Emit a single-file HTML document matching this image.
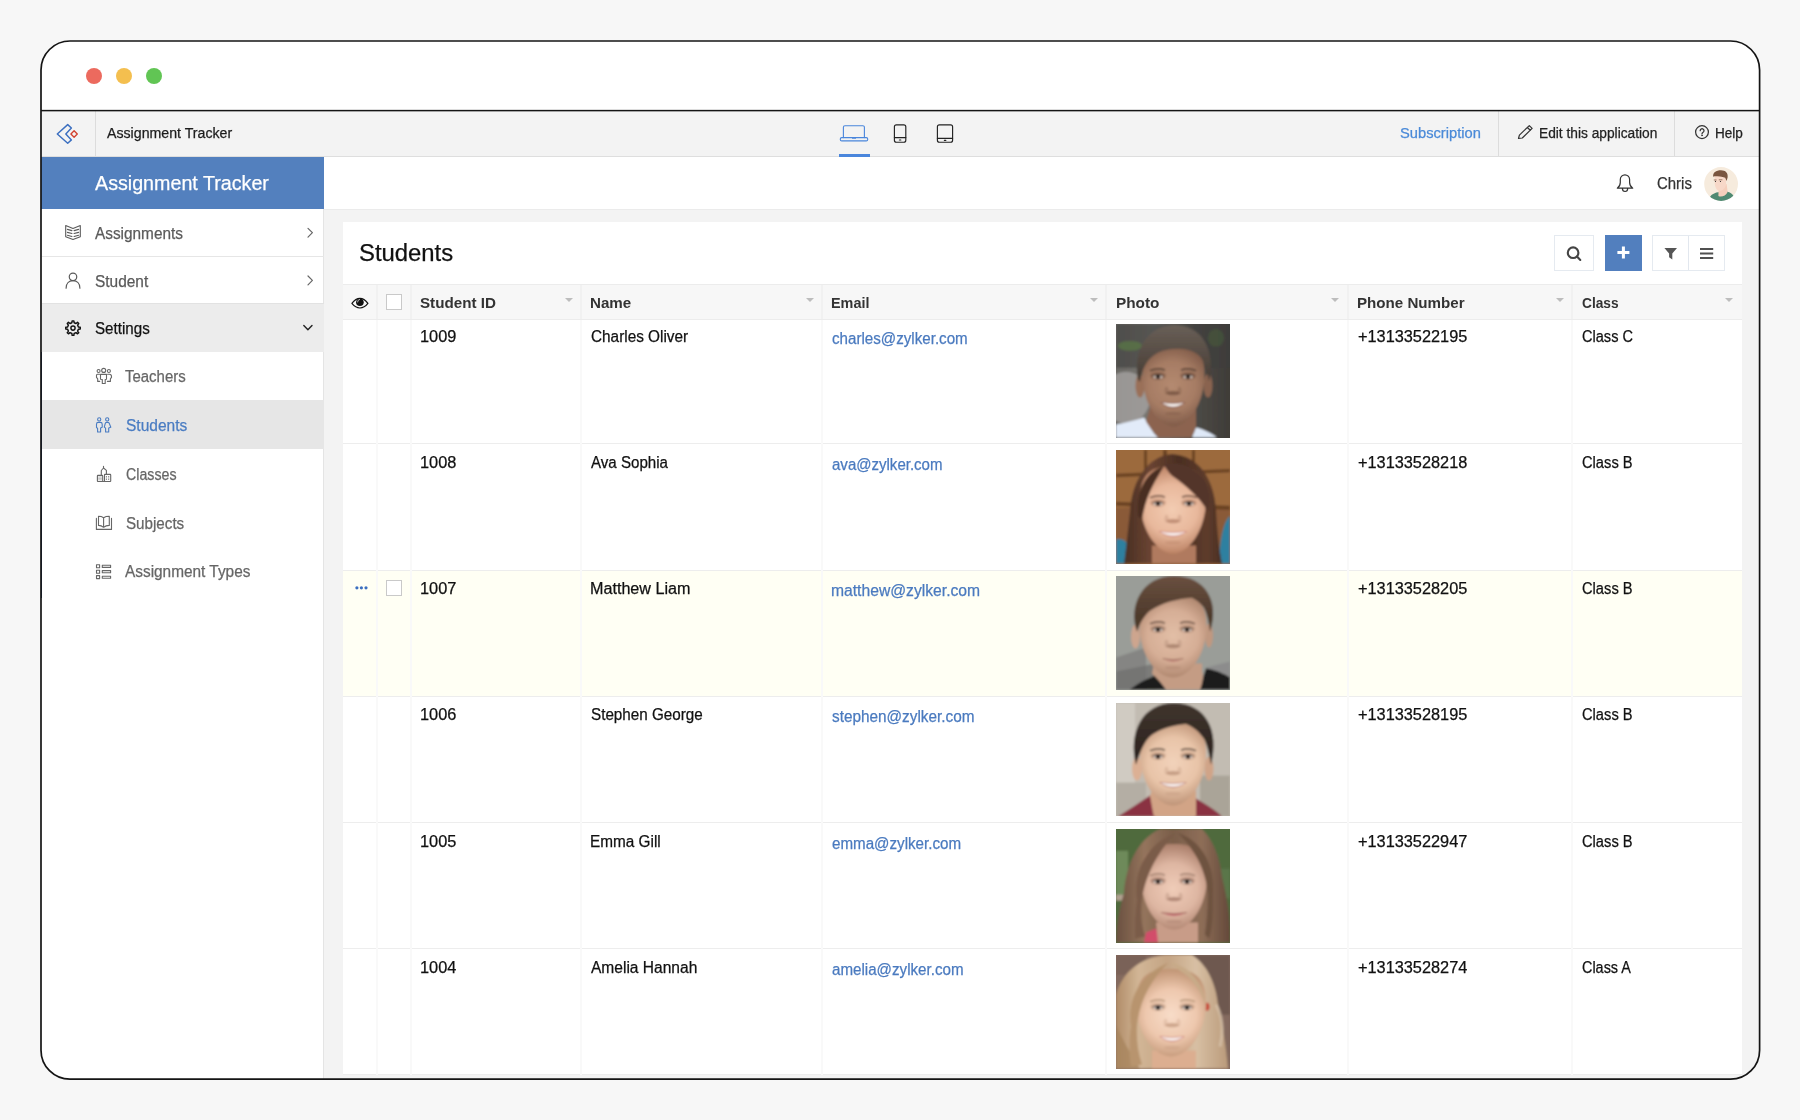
<!DOCTYPE html>
<html lang="en">
<head>
<meta charset="utf-8">
<title>Assignment Tracker - Students</title>
<style>
html,body{margin:0;padding:0}
body{width:1800px;height:1120px;overflow:hidden;background:#f7f7f7;font-family:"Liberation Sans",sans-serif;position:relative}
#win{position:absolute;left:41px;top:41px;width:1718.6px;height:1038.2px;border-radius:29px;overflow:hidden;background:#fff}
#in{opacity:.999;position:absolute;left:-41px;top:-41px;width:1800px;height:1120px}
#in div,#in svg,#in span{position:absolute}
.t{transform-origin:0 0;white-space:nowrap;line-height:20px;-webkit-font-smoothing:antialiased;-webkit-text-stroke:.25px currentColor}
.dot{width:16px;height:16px;border-radius:50%;top:67.8px}
.vl{width:1px;background:#dcdcdc}
.hl{height:1px;background:#e6e6e6}
.cd{width:2px;margin-left:-.5px;top:320px;height:755px;background:#f9f9f9}
.rs{left:343px;width:1399px;height:1px;background:#ededed}
.tri{width:0;height:0;border-left:4.2px solid transparent;border-right:4.2px solid transparent;border-top:4.6px solid #bdbdbd;top:297.8px}
.btn{top:235px;height:36px;border:1px solid #e5eaf0;background:#fff;box-sizing:border-box}
.ph{left:1116px;width:114px;height:113.4px;overflow:hidden}
#frame{position:absolute;left:0;top:0}

</style>
</head>
<body>
<div id="win"><div id="in">
<!-- title bar -->
<div class="dot" style="left:85.8px;background:#ec6a5e"></div>
<div class="dot" style="left:115.8px;background:#f4bf4f"></div>
<div class="dot" style="left:145.9px;background:#61c554"></div>
<!-- app bar -->
<div style="left:40px;top:111.3px;width:1720px;height:45px;background:#f3f3f3"></div>
<div class="hl" style="left:40px;top:155.8px;width:1720px;background:#dedede"></div>
<div class="vl" style="left:95px;top:111px;height:45px"></div>
<div class="vl" style="left:1498px;top:111px;height:45px"></div>
<div class="vl" style="left:1674px;top:111px;height:45px"></div>
<div style="left:838.7px;top:154px;width:31.6px;height:3px;background:#4a86dc"></div>
<!-- sidebar -->
<div style="left:40px;top:156.6px;width:283.7px;height:52.2px;background:#5380be"></div>
<div style="left:323.7px;top:156.6px;width:1440px;height:52.4px;background:#fff"></div>
<div style="left:323.7px;top:209px;width:1440px;height:900px;background:#f3f3f3"></div>
<div class="hl" style="left:323.7px;top:208.8px;width:1440px;background:#ebebeb"></div>
<div class="vl" style="left:323.2px;top:209px;height:880px;background:#e4e4e4"></div>
<div class="hl" style="left:42px;top:256.4px;width:281.5px"></div>
<div style="left:42px;top:303.2px;width:281.5px;height:48.6px;background:#ececec"></div>
<div class="hl" style="left:42px;top:303.2px;width:281.5px;background:#e2e2e2"></div>
<div style="left:42px;top:400.3px;width:281.5px;height:49px;background:#e6e6e6"></div>
<div style="left:41px;top:352px;width:1.3px;height:245.5px;background:#1d3a6e"></div>
<!-- panel -->
<div style="left:343px;top:221.6px;width:1399px;height:853.4px;background:#fff"></div>
<div style="left:343px;top:284.4px;width:1399px;height:35.2px;background:#f7f7f7"></div>
<div class="hl" style="left:343px;top:284px;width:1399px;background:#ececec"></div>
<div class="hl" style="left:343px;top:319.3px;width:1399px;background:#ececec"></div>
<div style="left:343px;top:570.4px;width:1399px;height:125.8px;background:#fffff4"></div>
<div class="rs" style="top:443px"></div>
<div class="rs" style="top:570px"></div>
<div class="rs" style="top:696px"></div>
<div class="rs" style="top:822px"></div>
<div class="rs" style="top:948px"></div>
<div class="rs" style="top:1074px"></div>
<div class="cd" style="left:376.3px"></div>
<div class="cd" style="left:410.3px"></div>
<div class="cd" style="left:580.6px"></div>
<div class="cd" style="left:821.8px"></div>
<div class="cd" style="left:1105.8px"></div>
<div class="cd" style="left:1347.6px"></div>
<div class="cd" style="left:1571px"></div>
<div class="cd" style="left:376.3px;top:285px;height:34px;background:#f1f1f1"></div>
<div class="cd" style="left:410.3px;top:285px;height:34px;background:#f1f1f1"></div>
<div class="cd" style="left:580.6px;top:285px;height:34px;background:#f1f1f1"></div>
<div class="cd" style="left:821.8px;top:285px;height:34px;background:#f1f1f1"></div>
<div class="cd" style="left:1105.8px;top:285px;height:34px;background:#f1f1f1"></div>
<div class="cd" style="left:1347.6px;top:285px;height:34px;background:#f1f1f1"></div>
<div class="cd" style="left:1571px;top:285px;height:34px;background:#f1f1f1"></div>
<div class="tri" style="left:564.6px"></div>
<div class="tri" style="left:805.8px"></div>
<div class="tri" style="left:1090.2px"></div>
<div class="tri" style="left:1331.4px"></div>
<div class="tri" style="left:1555.6px"></div>
<div class="tri" style="left:1724.8px"></div>
<!-- checkboxes -->
<div style="left:386px;top:294px;width:16px;height:15.6px;box-sizing:border-box;border:1px solid #c9c9c9;background:#fff"></div>
<div style="left:386px;top:580.2px;width:16px;height:15.6px;box-sizing:border-box;border:1px solid #c9c9c9;background:#fff"></div>
<!-- buttons -->
<div class="btn" style="left:1554px;width:40px"></div>
<div class="btn" style="left:1605px;width:37px;background:#527fbe;border-color:#527fbe"></div>
<div class="btn" style="left:1652px;width:73px"></div>
<div class="vl" style="left:1688.3px;top:236px;height:34px;background:#e2e7ee"></div>
<svg style="left:0;top:0" width="1800" height="1120" viewBox="0 0 1800 1120" fill="none" stroke-linecap="round" stroke-linejoin="round">
<path d="M57.3,134 L67.7,124.6 L71.4,128 L65.8,134 L71.4,139.9 L67.7,143.3 Z" stroke="#3b6fc0" stroke-width="1.45"/>
<path d="M74.1,130.8 L77.3,134 L74.1,137.2 L70.9,134 Z" stroke="#d2422f" stroke-width="1.35"/>
<g stroke="#4a86dc" stroke-width="1.1"><path d="M843.4,137.6 V127.2 a1.5,1.5 0 0 1 1.5,-1.5 H862.9 a1.5,1.5 0 0 1 1.5,1.5 V137.6"/><rect x="840.3" y="137.6" width="27.4" height="3.3" rx="1.4"/><path d="M852,137.8 h4 v0.9 h-4z" fill="#4a86dc" stroke="none"/></g>
<g stroke="#222" stroke-width="1.15"><rect x="894.4" y="124.8" width="11.4" height="17.4" rx="2"/><path d="M894.4,137.6 H905.8"/><path d="M899.4,140 h1.4" stroke-width="1.2"/></g>
<g stroke="#222" stroke-width="1.15"><rect x="937.4" y="124.8" width="15.2" height="17.4" rx="2"/><path d="M937.4,138.3 H952.6"/><path d="M944.4,140.4 h1.4" stroke-width="1.2"/></g>
<path d="M1518.5,138.5 L1519.4,135.1 L1529.3,125.6 L1532.1,128.4 L1522.3,138 Z M1527.3,127.5 L1530.3,130.3" stroke="#333" stroke-width="1.2"/>
<g stroke="#333"><circle cx="1702" cy="132.1" r="6.4" stroke-width="1.25"/><path d="M1700.2,130.7 a1.9,1.9 0 1 1 2.9,1.6 c-0.8,0.5 -1.1,0.8 -1.1,1.6" stroke-width="1.3"/><circle cx="1702" cy="135.5" r="0.5" fill="#333" stroke-width="0.6"/></g>
<path d="M1617.3,188.2 H1632.7 C1630.6,186.6 1629.6,184.6 1629.6,182.4 V179.6 a4.65,4.8 0 0 0 -9.3,0 V182.4 C1620.3,184.6 1619.4,186.6 1617.3,188.2 Z M1622.4,188.6 a2.65,2.9 0 0 0 5.3,0" stroke="#333" stroke-width="1.2"/>
<g stroke="#5a5a5a" stroke-width="1.1"><path d="M65.7,225.6 L73,228.4 L80.3,225.6 V236.7 L73,239.4 L65.7,236.7 Z"/>
<path d="M67.4,229.40 L71.9,230.60 M78.6,229.40 L74.1,230.60"/>
<path d="M67.4,232.35 L71.9,233.55 M78.6,232.35 L74.1,233.55"/>
<path d="M67.4,235.30 L71.9,236.50 M78.6,235.30 L74.1,236.50"/>
</g>
<g stroke="#5a5a5a" stroke-width="1.2"><circle cx="73" cy="276.8" r="3.75"/><path d="M66.1,288.2 C66.1,283.6 69,280.7 73,280.7 C77,280.7 79.9,283.6 79.9,288.2"/></g>
<path d="M71.88,322.71 L72.14,320.85 L73.86,320.85 L74.12,322.71 L76.02,323.50 L77.52,322.37 L78.73,323.58 L77.60,325.08 L78.39,326.98 L80.25,327.24 L80.25,328.96 L78.39,329.22 L77.60,331.12 L78.73,332.62 L77.52,333.83 L76.02,332.70 L74.12,333.49 L73.86,335.35 L72.14,335.35 L71.88,333.49 L69.98,332.70 L68.48,333.83 L67.27,332.62 L68.40,331.12 L67.61,329.22 L65.75,328.96 L65.75,327.24 L67.61,326.98 L68.40,325.08 L67.27,323.58 L68.48,322.37 L69.98,323.50 Z" stroke="#111" stroke-width="1.45"/><circle cx="73" cy="328.1" r="2.1" stroke="#111" stroke-width="1.4"/>
<path d="M308,228.3 L312.4,232.7 L308,237.1" stroke="#666" stroke-width="1.2"/>
<path d="M308,276 L312.4,280.4 L308,284.8" stroke="#666" stroke-width="1.2"/>
<path d="M303.8,325.6 L307.9,329.8 L312,325.6" stroke="#222" stroke-width="1.4"/>
<g stroke="#666" stroke-width="1.1"><circle cx="103.7" cy="370.4" r="2"/><circle cx="98.6" cy="371" r="1.5"/><circle cx="108.9" cy="371" r="1.5"/><path d="M100.5,374.4 H106.5 V379.2 L105.2,379.5 V383.5 H102.3 V379.5 L100.5,379.2 Z"/><path d="M99.6,374.2 H97.4 C96.8,374.2 96.5,374.6 96.5,375.2 V377.4 L97.7,378.8 V381.4 H99.7"/><path d="M107.6,374.2 H109.4 C110.6,374.2 111.5,375.2 111.5,376.4 V377.4 L110.4,378.8 V381.4 H107.4"/></g>
<g stroke="#4a7cc2" stroke-width="1.1"><circle cx="99.2" cy="419.4" r="1.6"/><circle cx="107.2" cy="419.4" r="1.6"/><path d="M98.2,422.4 H100.4 C101.6,422.4 102.2,423.2 102.2,424.2 V427.2 L100.6,428 V432 H97.6 V428.5 L96.5,427.4 V424.2 C96.5,423.2 97.2,422.4 98.2,422.4 Z"/><path d="M106.4,422.4 H108 C108.8,422.4 109.2,422.9 109.4,423.6 L110.8,427.3 L108.7,428 V432 H105.6 V428.2 L104.3,427.1 L105.2,423.6 C105.4,422.9 105.8,422.4 106.4,422.4 Z"/></g>
<g stroke="#666" stroke-width="1.1"><path d="M103.5,466.2 V467.9 M101.3,475 V470.5 L103.5,468 L106.4,470.4 V474"/><rect x="97.4" y="475.4" width="5.3" height="6.1" rx="0.5"/><rect x="104.5" y="474.4" width="6.2" height="7.1" rx="0.5"/><path d="M102.7,481.5 H104.5"/><path d="M98.6,477 H101.5 M98.6,478.4 H101.5 M98.6,479.8 H101.5" stroke="#999" stroke-width="0.6"/><path d="M106.4,476.5 V479.6 M108.7,476.5 V479.6" stroke-width="0.9" stroke-dasharray="0.6 1.8"/></g>
<g stroke="#666" stroke-width="1.1"><path d="M96.4,518.4 V529.4 H111.5 V518.4"/><path d="M98.5,516.3 C100.5,516.3 102.2,516.8 103.6,517.7 C105,516.8 106.9,516.3 109.3,516.3 V525.4 C106.9,525.4 105,526.1 103.6,527.3 C102.2,526.1 100.5,525.4 98.5,525.4 Z M103.6,517.7 V527.3"/></g>
<g stroke="#666" stroke-width="1.1">
<rect x="96.5" y="564.7" width="3.1" height="3"/><rect x="102.3" y="565.3" width="8.3" height="2.1"/>
<rect x="96.5" y="570.3" width="3.1" height="3"/><rect x="102.3" y="570.6" width="8.3" height="2.1"/>
<rect x="96.5" y="575.6" width="3.1" height="3"/><rect x="102.3" y="576.2" width="8.3" height="2.1"/>
</g>
<path d="M351.9,303.4 C354.5,299.9 357,298.4 359.9,298.4 C362.8,298.4 365.4,299.9 367.9,303.4 C365.4,306.6 362.8,308 359.9,308 C357,308 354.5,306.6 351.9,303.4 Z" stroke="#111" stroke-width="1.2"/>
<circle cx="359.9" cy="302.3" r="3.8" fill="#111"/><path d="M357.6,302 a2.4,2.4 0 0 1 2,-2.6" stroke="#fff" stroke-width="0.7"/>
<g fill="#3b6fc0"><circle cx="356.9" cy="587.8" r="1.6"/><circle cx="361.4" cy="587.8" r="1.6"/><circle cx="366" cy="587.8" r="1.6"/></g>
<g stroke="#444" stroke-width="2.1"><circle cx="1573.1" cy="252.7" r="5.3"/><path d="M1577,256.6 L1580.3,259.9"/></g>
<path d="M1623.4,246.4 V258.4 M1617.4,252.4 H1629.4" stroke="#fff" stroke-width="3" stroke-linecap="butt"/>
<path d="M1664.4,247.9 H1677 L1672.3,253.4 V259.6 L1669.1,257.2 V253.4 Z" fill="#555"/>
<path d="M1700,249 H1713.2 M1700,253.5 H1713.2 M1700,258 H1713.2" stroke="#505050" stroke-width="2" stroke-linecap="butt"/>
<g><clipPath id="av"><circle cx="1721.1" cy="184" r="16.9"/></clipPath><g clip-path="url(#av)"><rect x="1704" y="167" width="35" height="35" fill="#f6ebdd"/><path d="M1708,202 C1709,196 1713,193 1718,192.3 L1727,191.5 C1731,192.5 1734.5,195 1736,202 Z" fill="#4f8a72"/><path d="M1718.6,188 L1726.6,184 L1727.6,192 C1726,196 1721,197.5 1718.4,196 Z" fill="#f5cfbc"/><path d="M1714.6,176 H1726 V184 C1726,188 1722,191.4 1719,190.8 C1716.5,190.3 1715,187 1714.8,184 Z" fill="#f7d8c8"/><path d="M1713.2,176.8 C1712.6,172.5 1716,170.2 1721,170.2 C1725.5,170.2 1728.4,173 1727.6,177.5 L1726.6,181 L1725.2,177.8 C1722,176 1718,176.6 1714.6,176.2 Z" fill="#79553f"/><circle cx="1715.5" cy="181.5" r="0.6" fill="#222"/><circle cx="1720.5" cy="181.5" r="0.6" fill="#222"/><path d="M1714.2,180 h2 M1719.2,179.8 h2.8" stroke="#79553f" stroke-width="0.7"/></g></g>
</svg>
<svg style="left:0;top:0" width="0" height="0"><defs><filter id="bl" x="-5%" y="-5%" width="110%" height="110%"><feGaussianBlur stdDeviation="0.9"/></filter></defs></svg>
<div class="ph" style="top:324.4px"><svg style="left:-4px;top:-4px" width="122" height="121.4" viewBox="-4 -4 122 122" preserveAspectRatio="none"><g filter="url(#bl)"><rect x="-4" y="-4" width="122" height="122" fill="#888"/><defs><radialGradient id="f1" gradientUnits="userSpaceOnUse" cx="56" cy="62" r="44"><stop offset="0" stop-color="#b48a70"/><stop offset="0.55" stop-color="#a67c64"/><stop offset="1" stop-color="#7a5644"/></radialGradient><linearGradient id="b1" gradientUnits="userSpaceOnUse" x1="0" y1="0" x2="114" y2="0"><stop offset="0" stop-color="#6a6864"/><stop offset="0.35" stop-color="#7a7874"/><stop offset="0.7" stop-color="#4c4a46"/><stop offset="1" stop-color="#3f3c38"/></linearGradient><linearGradient id="h1" gradientUnits="userSpaceOnUse" x1="0" y1="0" x2="0" y2="50"><stop offset="0" stop-color="#6a6058"/><stop offset="1" stop-color="#4a4038"/></linearGradient></defs><rect x="-4" y="-4" width="122" height="122" fill="url(#b1)"/><rect x="0" y="0" width="114" height="44" fill="#3e3e3c" opacity=".6"/><ellipse cx="10" cy="74" rx="24" ry="26" fill="#a8a6a4" opacity=".75"/><ellipse cx="14" cy="22" rx="12" ry="5" fill="#5d8a40" opacity=".5"/><ellipse cx="100" cy="14" rx="8" ry="9" fill="#4a6a3a" opacity=".4"/><path d="M0,114 V101 C10,99 20,97 28,94 L38,110 L42,114Z" fill="#e2ebf9"/><path d="M80,104 C88,106 96,110 101,114 H76Z" fill="#dfe9f8"/><path d="M34,84 H80 V103 C78,110 76,114 74,114 H42 C38,110 34,104 30,98Z" fill="#8c6450"/><ellipse cx="24" cy="62" rx="4.5" ry="12" fill="#9a7058"/><ellipse cx="92" cy="62" rx="4.5" ry="12" fill="#8a6450"/><path d="M26.5,50.3 C26.5,24.8 38.3,18 57.5,18 C76.7,18 88.5,24.8 88.5,50.3 C88.5,79.2 73.0,103 57.5,103 C42.0,103 26.5,79.2 26.5,50.3Z" fill="url(#f1)"/><path d="M22,56 C17,28 30,2 58,1 C86,1 100,26 93,58 C91,48 89,40 85,34 C80,28 72,25 62,25 C50,25 42,28 36,33 C30,38 26,46 24,58Z" fill="url(#h1)"/><ellipse cx="42" cy="52" rx="8" ry="4.2" fill="#5a3a2c" opacity=".35"/><ellipse cx="72" cy="52" rx="8" ry="4.2" fill="#5a3a2c" opacity=".35"/><path d="M34,47 q8,-3.5 15,-0.5 M65,46.5 q7,-3 15,0.5" stroke="#3a2c24" stroke-width="1.8" fill="none" opacity="0.75"/><ellipse cx="42" cy="53" rx="4.8" ry="1.9" fill="#d9cbc2"/><ellipse cx="72" cy="53" rx="4.8" ry="1.9" fill="#d9cbc2"/><circle cx="42" cy="53" r="2.4" fill="#2e2420"/><circle cx="72" cy="53" r="2.4" fill="#2e2420"/><path d="M36.5,52.5 q5.5,-3.4 11,0 M66.5,52.5 q5.5,-3.4 11,0" stroke="#2e2420" stroke-width="1.1" fill="none" opacity=".85"/><ellipse cx="57" cy="69.5" rx="6.5" ry="2.2" fill="#5a3a2c" opacity=".55"/><ellipse cx="50.5" cy="67" rx="2" ry="4" fill="#5a3a2c" opacity=".22"/><ellipse cx="63.5" cy="67" rx="2" ry="4" fill="#5a3a2c" opacity=".22"/><path d="M44.5,78.5 Q57,80.5 69.5,78.5 Q57,90 44.5,78.5Z" fill="#7a4a40"/><path d="M46.0,79.2 Q57,81.2 68.0,79.2 Q57,87 46.0,79.2Z" fill="#fbf6f2"/><ellipse cx="57" cy="90" rx="8" ry="1.8" fill="#5a3a2c" opacity=".2"/></g></svg></div>
<div class="ph" style="top:450.2px"><svg style="left:-4px;top:-4px" width="122" height="121.4" viewBox="-4 -4 122 122" preserveAspectRatio="none"><g filter="url(#bl)"><rect x="-4" y="-4" width="122" height="122" fill="#888"/><defs><radialGradient id="f2" gradientUnits="userSpaceOnUse" cx="56" cy="60" r="46"><stop offset="0" stop-color="#f3ccb2"/><stop offset="0.55" stop-color="#e8b89c"/><stop offset="1" stop-color="#b87e60"/></radialGradient><linearGradient id="h2" gradientUnits="userSpaceOnUse" x1="0" y1="0" x2="114" y2="0"><stop offset="0" stop-color="#3e281e"/><stop offset="0.3" stop-color="#6a4432"/><stop offset="0.55" stop-color="#4a2e22"/><stop offset="0.8" stop-color="#5e3c2c"/><stop offset="1" stop-color="#3e281e"/></linearGradient></defs><rect x="-4" y="-4" width="122" height="122" fill="#9c6a3e"/><rect x="0" y="58" width="114" height="56" fill="#8a5a38"/><path d="M28,0 h3 v60 h-3z M47,0 h4 v12 h-4z M76,0 h3 v40 h-3z M0,24 L114,19 v3.5 L0,27.5z M0,52 L114,56 v4 L0,56z" fill="#5e3a1e" opacity=".8"/><path d="M0,90 C6,88 12,92 14,100 L10,114 H0Z" fill="#2f80a0"/><path d="M114,66 C108,72 104,86 103,114 H114Z" fill="#2f80a0"/><path d="M8,114 C10,100 12,80 14,62 C16,30 32,6 56,4 C84,6 98,30 100,60 C101,80 103,100 106,114Z" fill="url(#h2)"/><path d="M36,96 H80 V114 H36Z" fill="#b07a5e"/><path d="M24,49.4 C24,23.0 36.5,16 57,16 C77.5,16 90,23.0 90,49.4 C90,79.4 73.5,104 57,104 C40.5,104 24,79.4 24,49.4Z" fill="url(#f2)"/><path d="M22,66 C20,40 30,22 48,16 C40,30 30,44 26,70Z" fill="#4a2e22"/><path d="M48,15 C60,10 78,16 88,30 C94,40 95,52 92,62 C84,48 70,36 56,26 C52,22 50,18 48,15Z" fill="#53352a"/><ellipse cx="42" cy="53" rx="8" ry="4.2" fill="#a06a50" opacity=".35"/><ellipse cx="73" cy="53" rx="8" ry="4.2" fill="#a06a50" opacity=".35"/><path d="M34,48 q8,-3.5 15,-0.5 M66,47.5 q7,-3 15,0.5" stroke="#4a3026" stroke-width="1.8" fill="none" opacity="0.75"/><ellipse cx="42" cy="54" rx="4.8" ry="1.9" fill="#d9cbc2"/><ellipse cx="73" cy="54" rx="4.8" ry="1.9" fill="#d9cbc2"/><circle cx="42" cy="54" r="2.4" fill="#2e2420"/><circle cx="73" cy="54" r="2.4" fill="#2e2420"/><path d="M36.5,53.5 q5.5,-3.4 11,0 M67.5,53.5 q5.5,-3.4 11,0" stroke="#2e2420" stroke-width="1.1" fill="none" opacity=".85"/><ellipse cx="57" cy="71.5" rx="6.5" ry="2.2" fill="#a06a50" opacity=".55"/><ellipse cx="50.5" cy="69" rx="2" ry="4" fill="#a06a50" opacity=".22"/><ellipse cx="63.5" cy="69" rx="2" ry="4" fill="#a06a50" opacity=".22"/><path d="M42.5,81.5 Q57,83.5 71.5,81.5 Q57,93 42.5,81.5Z" fill="#c4706c"/><path d="M44.0,82.2 Q57,84.2 70.0,82.2 Q57,90 44.0,82.2Z" fill="#fbf6f2"/><ellipse cx="57" cy="93" rx="8" ry="1.8" fill="#a06a50" opacity=".2"/></g></svg></div>
<div class="ph" style="top:576.2px"><svg style="left:-4px;top:-4px" width="122" height="121.4" viewBox="-4 -4 122 122" preserveAspectRatio="none"><g filter="url(#bl)"><rect x="-4" y="-4" width="122" height="122" fill="#888"/><defs><radialGradient id="f3" gradientUnits="userSpaceOnUse" cx="57" cy="60" r="46"><stop offset="0" stop-color="#e2bea6"/><stop offset="0.55" stop-color="#d6ae96"/><stop offset="1" stop-color="#a88068"/></radialGradient><linearGradient id="h3" gradientUnits="userSpaceOnUse" x1="0" y1="0" x2="0" y2="40"><stop offset="0" stop-color="#6a5040"/><stop offset="1" stop-color="#4e3a2c"/></linearGradient></defs><rect x="-4" y="-4" width="122" height="122" fill="#9a9d98"/><path d="M0,82 L30,72 V114 H0Z" fill="#80807e" opacity=".8"/><path d="M0,96 L40,88 V114 H0Z" fill="#6e6e6c" opacity=".7"/><path d="M90,92 L114,86 V114 H90Z" fill="#88888a" opacity=".8"/><path d="M14,114 C24,106 34,102 40,100 L50,114Z" fill="#1c1b1b"/><path d="M84,114 C86,106 88,98 90,93 C98,94 108,98 114,102 V114Z" fill="#1c1b1b"/><path d="M38,88 H86 V96 C88,100 86,110 84,114 H50 C46,108 40,102 36,98Z" fill="#c49c84"/><ellipse cx="19.5" cy="61" rx="4.5" ry="12" fill="#cda58e"/><ellipse cx="93" cy="60" rx="4" ry="12" fill="#c09880"/><path d="M23.5,49.9 C23.5,24.7 36.2,18 57,18 C77.8,18 90.5,24.7 90.5,49.9 C90.5,78.5 73.8,102 57,102 C40.2,102 23.5,78.5 23.5,49.9Z" fill="url(#f3)"/><path d="M21,56 C12,30 26,0 58,0 C90,0 104,26 94,56 C93,46 91,38 88,32 C84,27 80,24 76,22 C62,23 46,27 34,35 C27,41 24,48 21,56Z" fill="url(#h3)"/><ellipse cx="42" cy="53" rx="8" ry="4.2" fill="#8a6450" opacity=".35"/><ellipse cx="71" cy="53" rx="8" ry="4.2" fill="#8a6450" opacity=".35"/><path d="M34,48 q8,-3.5 15,-0.5 M64,47.5 q7,-3 15,0.5" stroke="#4a3428" stroke-width="1.8" fill="none" opacity="0.75"/><ellipse cx="42" cy="54" rx="4.8" ry="1.9" fill="#d9cbc2"/><ellipse cx="71" cy="54" rx="4.8" ry="1.9" fill="#d9cbc2"/><circle cx="42" cy="54" r="2.4" fill="#2e2420"/><circle cx="71" cy="54" r="2.4" fill="#2e2420"/><path d="M36.5,53.5 q5.5,-3.4 11,0 M65.5,53.5 q5.5,-3.4 11,0" stroke="#2e2420" stroke-width="1.1" fill="none" opacity=".85"/><ellipse cx="57" cy="70.5" rx="6.5" ry="2.2" fill="#8a6450" opacity=".55"/><ellipse cx="50.5" cy="68" rx="2" ry="4" fill="#8a6450" opacity=".22"/><ellipse cx="63.5" cy="68" rx="2" ry="4" fill="#8a6450" opacity=".22"/><path d="M46.5,83 Q57,85.5 67.5,83 Q57,89.5 46.5,83Z" fill="#c08078"/><path d="M46.5,83 Q57,85.5 67.5,83" stroke="#8a6450" stroke-width="1" fill="none" opacity=".7"/><ellipse cx="57" cy="92" rx="8" ry="1.8" fill="#8a6450" opacity=".2"/></g></svg></div>
<div class="ph" style="top:702.8px"><svg style="left:-4px;top:-4px" width="122" height="121.4" viewBox="-4 -4 122 122" preserveAspectRatio="none"><g filter="url(#bl)"><rect x="-4" y="-4" width="122" height="122" fill="#888"/><defs><radialGradient id="f4" gradientUnits="userSpaceOnUse" cx="57" cy="60" r="46"><stop offset="0" stop-color="#f2d2ba"/><stop offset="0.55" stop-color="#e8c4a8"/><stop offset="1" stop-color="#b88c70"/></radialGradient><linearGradient id="h4" gradientUnits="userSpaceOnUse" x1="0" y1="0" x2="0" y2="50"><stop offset="0" stop-color="#40352e"/><stop offset="1" stop-color="#2e2520"/></linearGradient></defs><rect x="-4" y="-4" width="122" height="122" fill="#c2bcb2"/><rect x="0" y="0" width="19" height="114" fill="#d0cbc2"/><rect x="84" y="73" width="30" height="41" fill="#aaa498"/><rect x="0" y="80" width="30" height="34" fill="#b4aea4"/><path d="M2,114 C12,108 24,100 34,93 L40,114Z" fill="#8a3042"/><path d="M78,114 L80,96 C90,102 100,108 106,114Z" fill="#8a3042"/><path d="M36,88 H80 V114 H38 C36,106 35,98 34,93Z" fill="#d2a486"/><ellipse cx="21" cy="66" rx="5" ry="12" fill="#dcb094"/><ellipse cx="93" cy="66" rx="4.5" ry="12" fill="#d0a488"/><path d="M24,50.3 C24,24.8 36.5,18 57,18 C77.5,18 90,24.8 90,50.3 C90,79.2 73.5,103 57,103 C40.5,103 24,79.2 24,50.3Z" fill="url(#f4)"/><path d="M20,62 C12,30 26,0 58,0 C90,0 104,28 95,62 C93,50 91,42 88,36 C84,30 78,24 70,21 C58,22 44,26 36,32 C28,38 24,50 20,62Z" fill="url(#h4)"/><ellipse cx="42" cy="53" rx="8" ry="4.2" fill="#a87c62" opacity=".35"/><ellipse cx="72" cy="53" rx="8" ry="4.2" fill="#a87c62" opacity=".35"/><path d="M34,48 q8,-3.5 15,-0.5 M65,47.5 q7,-3 15,0.5" stroke="#3a2c24" stroke-width="1.8" fill="none" opacity="0.75"/><ellipse cx="42" cy="54" rx="4.8" ry="1.9" fill="#d9cbc2"/><ellipse cx="72" cy="54" rx="4.8" ry="1.9" fill="#d9cbc2"/><circle cx="42" cy="54" r="2.4" fill="#2e2420"/><circle cx="72" cy="54" r="2.4" fill="#2e2420"/><path d="M36.5,53.5 q5.5,-3.4 11,0 M66.5,53.5 q5.5,-3.4 11,0" stroke="#2e2420" stroke-width="1.1" fill="none" opacity=".85"/><ellipse cx="57" cy="70.5" rx="6.5" ry="2.2" fill="#a87c62" opacity=".55"/><ellipse cx="50.5" cy="68" rx="2" ry="4" fill="#a87c62" opacity=".22"/><ellipse cx="63.5" cy="68" rx="2" ry="4" fill="#a87c62" opacity=".22"/><path d="M43,79.5 Q57,81.5 71,79.5 Q57,91 43,79.5Z" fill="#b4706a"/><path d="M44.5,80.2 Q57,82.2 69.5,80.2 Q57,88 44.5,80.2Z" fill="#fbf6f2"/><ellipse cx="57" cy="91" rx="8" ry="1.8" fill="#a87c62" opacity=".2"/></g></svg></div>
<div class="ph" style="top:829.4px"><svg style="left:-4px;top:-4px" width="122" height="121.4" viewBox="-4 -4 122 122" preserveAspectRatio="none"><g filter="url(#bl)"><rect x="-4" y="-4" width="122" height="122" fill="#888"/><defs><radialGradient id="f5" gradientUnits="userSpaceOnUse" cx="57" cy="60" r="46"><stop offset="0" stop-color="#efccb8"/><stop offset="0.55" stop-color="#deb6a2"/><stop offset="1" stop-color="#a87c68"/></radialGradient><linearGradient id="h5" gradientUnits="userSpaceOnUse" x1="0" y1="0" x2="114" y2="0"><stop offset="0" stop-color="#6a5040"/><stop offset="0.25" stop-color="#94745c"/><stop offset="0.5" stop-color="#7a5e4a"/><stop offset="0.75" stop-color="#8e6e58"/><stop offset="1" stop-color="#64493a"/></linearGradient></defs><rect x="-4" y="-4" width="122" height="122" fill="#4f6a3e"/><rect x="0" y="22" width="12" height="46" fill="#6e8a5a"/><rect x="0" y="66" width="8" height="6" fill="#b0a090"/><rect x="96" y="40" width="18" height="30" fill="#5a7648"/><path d="M0,114 C0,96 4,78 8,64 C10,36 22,10 44,0 H86 C98,12 104,30 106,48 C110,66 114,84 114,100 V114Z" fill="url(#h5)"/><path d="M30,104 L40,100 L44,114 H28Z" fill="#d24e6a"/><path d="M40,94 H82 V114 H42Z" fill="#c89c88"/><path d="M25,47.7 C25,21.9 37.5,15 58,15 C78.5,15 91,21.9 91,47.7 C91,76.9 74.5,101 58,101 C41.5,101 25,76.9 25,47.7Z" fill="url(#f5)"/><path d="M21,72 C17,40 32,14 60,4 C44,20 30,44 26,70 C24,84 25,96 29,108 L19,110 C19,96 19,84 21,72Z" fill="#7a5c48"/><path d="M62,4 C86,12 99,36 97,66 C97,84 97,98 93,110 L89,106 C91,92 92,80 92,66 C90,40 78,20 62,4Z" fill="#6e5240"/><ellipse cx="42" cy="52" rx="8" ry="4.2" fill="#8a5e4e" opacity=".35"/><ellipse cx="71" cy="52" rx="8" ry="4.2" fill="#8a5e4e" opacity=".35"/><path d="M34,47 q8,-3.5 15,-0.5 M64,46.5 q7,-3 15,0.5" stroke="#6a4e3e" stroke-width="1.8" fill="none" opacity="0.5"/><ellipse cx="42" cy="53" rx="4.8" ry="1.9" fill="#d9cbc2"/><ellipse cx="71" cy="53" rx="4.8" ry="1.9" fill="#d9cbc2"/><circle cx="42" cy="53" r="2.4" fill="#2e2420"/><circle cx="71" cy="53" r="2.4" fill="#2e2420"/><path d="M36.5,52.5 q5.5,-3.4 11,0 M65.5,52.5 q5.5,-3.4 11,0" stroke="#2e2420" stroke-width="1.1" fill="none" opacity=".85"/><ellipse cx="58" cy="70.5" rx="6.5" ry="2.2" fill="#8a5e4e" opacity=".55"/><ellipse cx="51.5" cy="68" rx="2" ry="4" fill="#8a5e4e" opacity=".22"/><ellipse cx="64.5" cy="68" rx="2" ry="4" fill="#8a5e4e" opacity=".22"/><path d="M45,84 Q58,86.5 71,84 Q58,90.5 45,84Z" fill="#c05a68"/><path d="M45,84 Q58,86.5 71,84" stroke="#8a5e4e" stroke-width="1" fill="none" opacity=".7"/><ellipse cx="58" cy="93" rx="8" ry="1.8" fill="#8a5e4e" opacity=".2"/></g></svg></div>
<div class="ph" style="top:955.2px"><svg style="left:-4px;top:-4px" width="122" height="121.4" viewBox="-4 -4 122 122" preserveAspectRatio="none"><g filter="url(#bl)"><rect x="-4" y="-4" width="122" height="122" fill="#888"/><defs><radialGradient id="f6" gradientUnits="userSpaceOnUse" cx="55" cy="60" r="46"><stop offset="0" stop-color="#f8dcc8"/><stop offset="0.55" stop-color="#eec8ae"/><stop offset="1" stop-color="#c09474"/></radialGradient><linearGradient id="h6" gradientUnits="userSpaceOnUse" x1="0" y1="0" x2="114" y2="0"><stop offset="0" stop-color="#b08c68"/><stop offset="0.2" stop-color="#d2b696"/><stop offset="0.45" stop-color="#c4a484"/><stop offset="0.7" stop-color="#d8c0a4"/><stop offset="1" stop-color="#b89878"/></linearGradient></defs><rect x="-4" y="-4" width="122" height="122" fill="#846a5e"/><rect x="70" y="0" width="44" height="60" fill="#6e5850"/><rect x="0" y="0" width="30" height="20" fill="#7a6258"/><path d="M0,114 V40 C6,18 24,2 50,0 H76 C92,10 100,30 102,50 C106,70 110,90 112,114Z" fill="url(#h6)"/><path d="M0,114 V70 C6,84 14,98 24,114Z" fill="#a8845e" opacity=".8"/><path d="M100,50 C106,60 108,76 104,92" stroke="#d8c4ac" stroke-width="3" fill="none" opacity=".7"/><path d="M36,96 H80 V114 H36Z" fill="#dcae90"/><ellipse cx="91" cy="52" rx="2.5" ry="4" fill="#c84a3a"/><path d="M20,47.4 C20,21.0 33.3,14 55,14 C76.7,14 90,21.0 90,47.4 C90,77.4 72.5,102 55,102 C37.5,102 20,77.4 20,47.4Z" fill="url(#f6)"/><path d="M15,72 C11,44 24,20 52,8 C36,24 24,44 21,70 C20,84 22,98 26,110 L15,112 C13,98 13,84 15,72Z" fill="#b8946e"/><path d="M54,8 C74,10 90,30 90,56 C88,40 78,24 64,16 C60,12 56,10 54,8Z" fill="#c8aa88"/><ellipse cx="42" cy="52" rx="8" ry="4.2" fill="#b08468" opacity=".35"/><ellipse cx="71" cy="52" rx="8" ry="4.2" fill="#b08468" opacity=".35"/><path d="M34,47 q8,-3.5 15,-0.5 M64,46.5 q7,-3 15,0.5" stroke="#9a7a5a" stroke-width="1.8" fill="none" opacity="0.6"/><ellipse cx="42" cy="53" rx="4.8" ry="1.9" fill="#d9cbc2"/><ellipse cx="71" cy="53" rx="4.8" ry="1.9" fill="#d9cbc2"/><circle cx="42" cy="53" r="2.4" fill="#2e2a2c"/><circle cx="71" cy="53" r="2.4" fill="#2e2a2c"/><path d="M36.5,52.5 q5.5,-3.4 11,0 M65.5,52.5 q5.5,-3.4 11,0" stroke="#2e2a2c" stroke-width="1.1" fill="none" opacity=".85"/><ellipse cx="56" cy="70.5" rx="6.5" ry="2.2" fill="#b08468" opacity=".55"/><ellipse cx="49.5" cy="68" rx="2" ry="4" fill="#b08468" opacity=".22"/><ellipse cx="62.5" cy="68" rx="2" ry="4" fill="#b08468" opacity=".22"/><path d="M43,81.5 Q56,83.5 69,81.5 Q56,93 43,81.5Z" fill="#c4706a"/><path d="M44.5,82.2 Q56,84.2 67.5,82.2 Q56,90 44.5,82.2Z" fill="#fbf6f2"/><ellipse cx="56" cy="93" rx="8" ry="1.8" fill="#b08468" opacity=".2"/></g></svg></div>
<span class="t" style="left:107.20px;top:123px;font-size:14px;transform:scaleX(1.0121);color:#1c1c1c;">Assignment Tracker</span>
<span class="t" style="left:1400.40px;top:123px;font-size:14px;transform:scaleX(1.0491);color:#4a8ad8;">Subscription</span>
<span class="t" style="left:1538.62px;top:123px;font-size:14px;transform:scaleX(0.9811);color:#222;">Edit this application</span>
<span class="t" style="left:1714.63px;top:123px;font-size:14px;transform:scaleX(0.9676);color:#222;">Help</span>
<span class="t" style="left:95.20px;top:173px;font-size:20.5px;transform:scaleX(0.9599);color:#ffffff;">Assignment Tracker</span>
<span class="t" style="left:95.00px;top:224px;font-size:16px;transform:scaleX(0.9597);color:#5a5a5a;">Assignments</span>
<span class="t" style="left:95.30px;top:272px;font-size:16px;transform:scaleX(0.9639);color:#5a5a5a;">Student</span>
<span class="t" style="left:95.30px;top:319px;font-size:16px;transform:scaleX(0.9462);color:#111;">Settings</span>
<span class="t" style="left:125.30px;top:367px;font-size:16px;transform:scaleX(0.9350);color:#666;">Teachers</span>
<span class="t" style="left:125.60px;top:416px;font-size:16px;transform:scaleX(0.9690);color:#4a7cc2;">Students</span>
<span class="t" style="left:125.80px;top:465px;font-size:16px;transform:scaleX(0.8874);color:#666;">Classes</span>
<span class="t" style="left:125.60px;top:514px;font-size:16px;transform:scaleX(0.9484);color:#666;">Subjects</span>
<span class="t" style="left:125.30px;top:562px;font-size:16px;transform:scaleX(0.9615);color:#666;">Assignment Types</span>
<span class="t" style="left:1657.30px;top:174px;font-size:16px;transform:scaleX(0.9348);color:#333;">Chris</span>
<span class="t" style="left:359.18px;top:243px;font-size:23.5px;transform:scaleX(1.0153);color:#111;">Students</span>
<span class="t" style="left:420.30px;top:293px;font-size:15.5px;transform:scaleX(0.9793);color:#333;font-weight:700;-webkit-text-stroke:0;">Student ID</span>
<span class="t" style="left:590.42px;top:293px;font-size:15.5px;transform:scaleX(0.9761);color:#333;font-weight:700;-webkit-text-stroke:0;">Name</span>
<span class="t" style="left:831.47px;top:293px;font-size:15.5px;transform:scaleX(0.9289);color:#333;font-weight:700;-webkit-text-stroke:0;">Email</span>
<span class="t" style="left:1115.61px;top:293px;font-size:15.5px;transform:scaleX(0.9897);color:#333;font-weight:700;-webkit-text-stroke:0;">Photo</span>
<span class="t" style="left:1356.52px;top:293px;font-size:15.5px;transform:scaleX(0.9762);color:#333;font-weight:700;-webkit-text-stroke:0;">Phone Number</span>
<span class="t" style="left:1581.50px;top:293px;font-size:15.5px;transform:scaleX(0.8861);color:#333;font-weight:700;-webkit-text-stroke:0;">Class</span>
<span class="t" style="left:419.78px;top:327px;font-size:16px;transform:scaleX(1.0203);color:#111;">1009</span>
<span class="t" style="left:591.20px;top:327px;font-size:16px;transform:scaleX(0.9585);color:#111;">Charles Oliver</span>
<span class="t" style="left:832.20px;top:329px;font-size:16px;transform:scaleX(0.9464);color:#4a7abf;">charles@zylker.com</span>
<span class="t" style="left:1358.20px;top:327px;font-size:16px;transform:scaleX(1.0193);color:#111;">+13133522195</span>
<span class="t" style="left:1581.60px;top:327px;font-size:16px;transform:scaleX(0.9107);color:#111;">Class C</span>
<span class="t" style="left:419.78px;top:453px;font-size:16px;transform:scaleX(1.0203);color:#111;">1008</span>
<span class="t" style="left:591.20px;top:453px;font-size:16px;transform:scaleX(0.9443);color:#111;">Ava Sophia</span>
<span class="t" style="left:832.20px;top:455px;font-size:16px;transform:scaleX(0.9396);color:#4a7abf;">ava@zylker.com</span>
<span class="t" style="left:1358.20px;top:453px;font-size:16px;transform:scaleX(1.0193);color:#111;">+13133528218</span>
<span class="t" style="left:1581.60px;top:453px;font-size:16px;transform:scaleX(0.9182);color:#111;">Class B</span>
<span class="t" style="left:419.78px;top:579px;font-size:16px;transform:scaleX(1.0203);color:#111;">1007</span>
<span class="t" style="left:590.19px;top:579px;font-size:16px;transform:scaleX(1.0085);color:#111;">Matthew Liam</span>
<span class="t" style="left:831.22px;top:581px;font-size:16px;transform:scaleX(0.9791);color:#4a7abf;">matthew@zylker.com</span>
<span class="t" style="left:1358.20px;top:579px;font-size:16px;transform:scaleX(1.0193);color:#111;">+13133528205</span>
<span class="t" style="left:1581.60px;top:579px;font-size:16px;transform:scaleX(0.9182);color:#111;">Class B</span>
<span class="t" style="left:419.78px;top:705px;font-size:16px;transform:scaleX(1.0203);color:#111;">1006</span>
<span class="t" style="left:591.20px;top:705px;font-size:16px;transform:scaleX(0.9513);color:#111;">Stephen George</span>
<span class="t" style="left:832.20px;top:707px;font-size:16px;transform:scaleX(0.9581);color:#4a7abf;">stephen@zylker.com</span>
<span class="t" style="left:1358.20px;top:705px;font-size:16px;transform:scaleX(1.0193);color:#111;">+13133528195</span>
<span class="t" style="left:1581.60px;top:705px;font-size:16px;transform:scaleX(0.9182);color:#111;">Class B</span>
<span class="t" style="left:419.78px;top:832px;font-size:16px;transform:scaleX(1.0203);color:#111;">1005</span>
<span class="t" style="left:590.24px;top:832px;font-size:16px;transform:scaleX(0.9581);color:#111;">Emma Gill</span>
<span class="t" style="left:832.20px;top:834px;font-size:16px;transform:scaleX(0.9475);color:#4a7abf;">emma@zylker.com</span>
<span class="t" style="left:1358.20px;top:832px;font-size:16px;transform:scaleX(1.0193);color:#111;">+13133522947</span>
<span class="t" style="left:1581.60px;top:832px;font-size:16px;transform:scaleX(0.9182);color:#111;">Class B</span>
<span class="t" style="left:419.78px;top:958px;font-size:16px;transform:scaleX(1.0203);color:#111;">1004</span>
<span class="t" style="left:591.20px;top:958px;font-size:16px;transform:scaleX(0.9714);color:#111;">Amelia Hannah</span>
<span class="t" style="left:832.20px;top:960px;font-size:16px;transform:scaleX(0.9465);color:#4a7abf;">amelia@zylker.com</span>
<span class="t" style="left:1358.20px;top:958px;font-size:16px;transform:scaleX(1.0193);color:#111;">+13133528274</span>
<span class="t" style="left:1581.60px;top:958px;font-size:16px;transform:scaleX(0.9017);color:#111;">Class A</span>
</div></div>
<svg id="frame" width="1800" height="1120" viewBox="0 0 1800 1120"><rect x="41" y="41" width="1718.6" height="1038.2" rx="29" fill="none" stroke="#141414" stroke-width="1.7"/><rect x="41" y="109.85" width="1718.6" height="1.5" fill="#141414"/></svg>

</body>
</html>
